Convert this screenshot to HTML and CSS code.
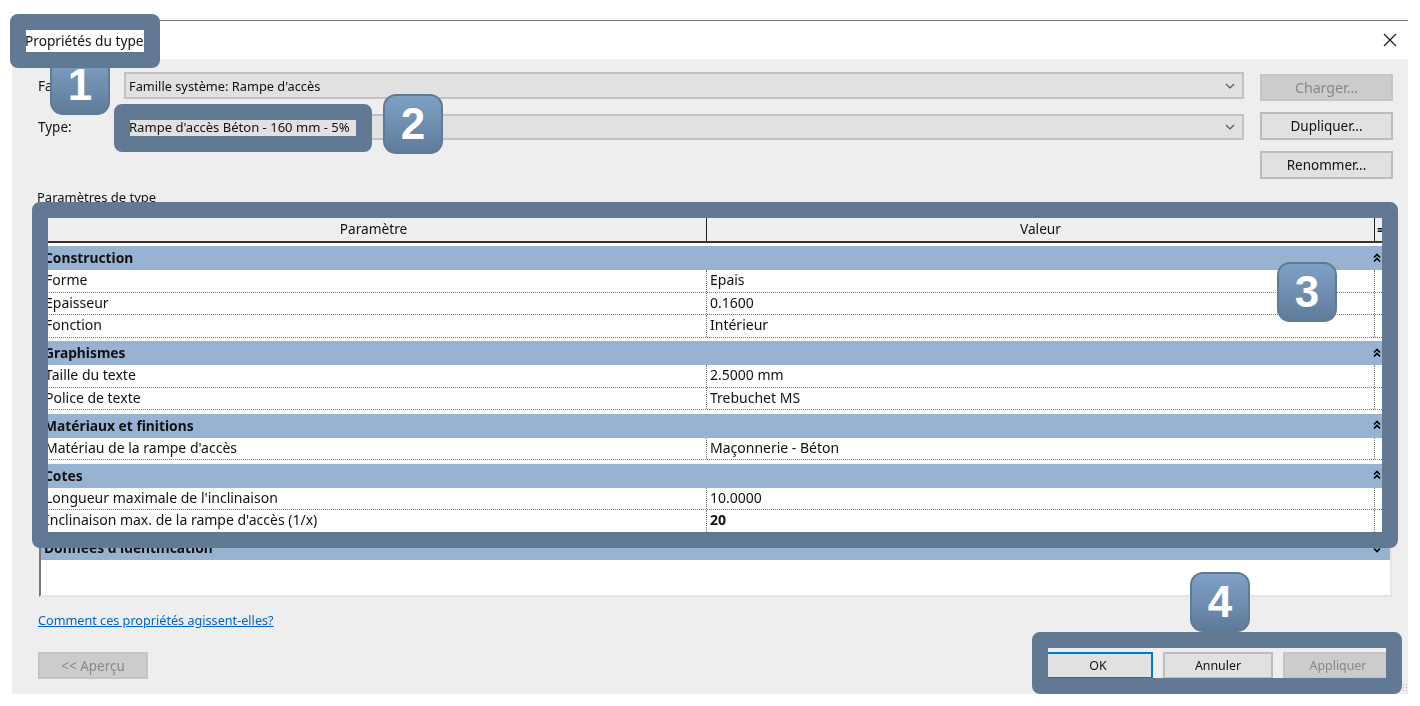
FILE: index.html
```html
<!DOCTYPE html>
<html lang="fr">
<head>
    <meta charset="UTF-8">
    <meta name="viewport" content="width=device-width, initial-scale=1.0">
    <title>Propriétés du type</title>
    <link rel="stylesheet" href="styles.css">
</head>
<body>

<div class="dialog">
    <div class="title-bar">
        <span>Propriétés du type</span>
        <svg class="close-icon" width="14" height="14" viewBox="0 0 14 14"><path d="M1 1 L13 13 M13 1 L1 13"/></svg>
    </div>

    <div class="dialog-body">
        <div class="top-block">
            <div class="fields">
                <div class="field first">
                    <label>Famille:</label>
                    <div class="combo">
                        <span>Famille système: Rampe d'accès</span>
                        <svg width="10" height="6" viewBox="0 0 10 6"><path d="M1 1 L5 5 L9 1"/></svg>
                    </div>
                </div>
                <div class="field second">
                    <label>Type:</label>
                    <div class="combo">
                        <span>Rampe d'accès Béton - 160 mm - 5%</span>
                        <svg width="10" height="6" viewBox="0 0 10 6"><path d="M1 1 L5 5 L9 1"/></svg>
                    </div>
                </div>
            </div>
            <div class="side-buttons">
                <button class="btn disabled charger">Charger...</button>
                <button class="btn tall">Dupliquer...</button>
                <button class="btn tall">Renommer...</button>
            </div>
        </div>

        <div class="params-label">Paramètres de type</div>

        <div class="params">
            <div class="params-head">
                <div class="head-cell">Paramètre</div>
                <div class="head-cell">Valeur</div>
                <div class="head-last">=</div>
            </div>

            <div class="group">
                <div class="group-title">
                    <span>Construction</span>
                    <svg class="fold" width="8" height="10" viewBox="0 0 8 10"><path d="M1 4.500 L4 1.500 L7 4.500 M1 8.500 L4 5.500 L7 8.500"/></svg>
                </div>
                <div class="row"><div class="cell">Forme</div><div class="cell value">Epais</div><div class="cell"></div></div>
                <div class="row"><div class="cell">Epaisseur</div><div class="cell value">0.1600</div><div class="cell"></div></div>
                <div class="row"><div class="cell">Fonction</div><div class="cell value">Intérieur</div><div class="cell"></div></div>
            </div>

            <div class="group">
                <div class="group-title">
                    <span>Graphismes</span>
                    <svg class="fold" width="8" height="10" viewBox="0 0 8 10"><path d="M1 4.500 L4 1.500 L7 4.500 M1 8.500 L4 5.500 L7 8.500"/></svg>
                </div>
                <div class="row"><div class="cell">Taille du texte</div><div class="cell value">2.5000 mm</div><div class="cell"></div></div>
                <div class="row"><div class="cell">Police de texte</div><div class="cell value">Trebuchet MS</div><div class="cell"></div></div>
            </div>

            <div class="group">
                <div class="group-title">
                    <span>Matériaux et finitions</span>
                    <svg class="fold" width="8" height="10" viewBox="0 0 8 10"><path d="M1 4.500 L4 1.500 L7 4.500 M1 8.500 L4 5.500 L7 8.500"/></svg>
                </div>
                <div class="row"><div class="cell">Matériau de la rampe d'accès</div><div class="cell value">Maçonnerie - Béton</div><div class="cell"></div></div>
            </div>

            <div class="group">
                <div class="group-title">
                    <span>Cotes</span>
                    <svg class="fold" width="8" height="10" viewBox="0 0 8 10"><path d="M1 4.500 L4 1.500 L7 4.500 M1 8.500 L4 5.500 L7 8.500"/></svg>
                </div>
                <div class="row"><div class="cell">Longueur maximale de l'inclinaison</div><div class="cell value">10.0000</div><div class="cell"></div></div>
                <div class="row"><div class="cell">Inclinaison max. de la rampe d'accès (1/x)</div><div class="cell value strong">20</div><div class="cell"></div></div>
            </div>

            <div class="group">
                <div class="group-title">
                    <span>Données d'identification</span>
                    <svg class="fold" width="8" height="10" viewBox="0 0 8 10"><path d="M1 1.500 L4 4.500 L7 1.500 M1 5.500 L4 8.500 L7 5.500"/></svg>
                </div>
            </div>
        </div>

        <a class="help-link" href="#">Comment ces propriétés agissent-elles?</a>

        <div class="footer">
            <button class="btn disabled wide">&lt;&lt; Aperçu</button>
            <div class="footer-right">
                <button class="btn wide default">OK</button>
                <button class="btn wide">Annuler</button>
                <button class="btn wide disabled">Appliquer</button>
            </div>
        </div>
    </div>
    <div class="grip"></div>
</div>

<!-- numbered callouts drawn over the dialog -->
<div class="badge badge-1">1</div>
<div class="badge badge-2">2</div>
<div class="badge badge-3">3</div>
<div class="badge badge-4">4</div>
<div class="callout callout-1"></div>
<div class="callout callout-2"></div>
<div class="callout callout-3"></div>
<div class="callout callout-4"></div>

</body>
</html>
```

FILE: styles.css
```css
body {
    font-family: "Noto Sans", sans-serif;
    font-size: 13.5px;
    color: #111;
    margin: 0;
    padding: 0;
    background-color: white;
}

.dialog {
    position: relative;
    width: 1396px;
    height: 674px;
    margin: 20px 0 0 12px;
    border-top: 1px solid #777;
    background-color: white;
    filter: blur(0.35px); /* the capture is a soft, scaled up screenshot */
}

.title-bar {
    height: 38px;
    padding: 0 12px 0 13px;
    display: flex;
    align-items: center;
    justify-content: space-between;
    font-size: 13.7px;
}

.close-icon {
    margin-right: -1px;
}

.close-icon path {
    fill: none;
    stroke: #222;
    stroke-width: 1.3;
}

.dialog-body {
    height: 635px;
    box-sizing: border-box;
    padding: 13px 15px 0 26px;
    background-color: #eeeeee;
}

.top-block {
    display: flex;
    justify-content: space-between;
}

.fields {
    width: 1206px;
}

.field {
    display: flex;
    align-items: center;
}

.field.first {
    height: 27px;
}

.field.second {
    height: 26px;
    margin-top: 15px;
}

.field label {
    width: 86px;
}

.combo {
    flex: 1;
    height: 100%;
    box-sizing: border-box;
    padding: 0 7px 0 3px;
    display: flex;
    align-items: center;
    justify-content: space-between;
    font-size: 12.8px;
    background-color: #e1e1e1;
    border: 2px solid #c2c2c2;
}

.field.second .combo {
    font-size: 13.050px;
}

.combo svg path {
    fill: none;
    stroke: #555;
    stroke-width: 1.2;
}

.side-buttons {
    width: 133px;
    display: flex;
    flex-direction: column;
    gap: 11px;
    padding-top: 2px;
}

.btn {
    font: inherit;
    color: #111;
    height: 27px;
    padding: 0;
    background-color: #e1e1e1;
    border: 2px solid #bcbcbc;
}

.btn.tall {
    height: 28px;
}

.btn.wide {
    width: 110px;
}

.btn.disabled {
    color: #888;
    background-color: #cccccc;
    border-color: #c4c4c4;
}

.btn.charger {
    font-size: 14.2px;
}

.btn.default {
    border-color: #0078d7;
}

.params-label {
    height: 18px;
    margin-top: 9px;
    margin-left: -1px;
    line-height: 18px;
    font-size: 13px;
}

.params {
    height: 391px;
    box-sizing: border-box;
    margin: 0 1px;
    font-size: 14px;
    background-color: white;
    border-left: 2px solid #777;
    border-top: 2px solid #777;
    border-right: 2px solid #e4e4e4;
    border-bottom: 2px solid #e4e4e4;
}

.params-head {
    height: 35px;
    box-sizing: border-box;
    margin-bottom: 3px;
    display: grid;
    grid-template-columns: 666px 668px 1fr;
    font-size: 13.7px;
    background-color: #eeeeee;
    border-bottom: 2px solid #333;
}

.head-cell {
    display: flex;
    align-items: flex-end;
    justify-content: center;
    padding-bottom: 3px;
    border-right: 1px solid #222;
}

.head-last {
    font-weight: bold;
    padding: 12px 0 0 2px;
}

.group {
    margin-bottom: 3.500px;
}

.group-title {
    height: 24px;
    box-sizing: border-box;
    padding: 0 9px 1px 3px;
    display: flex;
    align-items: center;
    justify-content: space-between;
    font-size: 13.800px;
    font-weight: bold;
    background-color: #98b3d1;
}

.fold path {
    fill: none;
    stroke: #000;
    stroke-width: 1.7;
}

.row {
    height: 22.500px;
    box-sizing: border-box;
    display: grid;
    grid-template-columns: 666px 668px 1fr;
    border-bottom: 1px dotted #777;
}

.cell {
    padding-left: 4px;
    line-height: 20px;
    white-space: nowrap;
    border-right: 1px dotted #777;
}

.cell:last-child {
    border-right: none;
}

.cell.value {
    padding-left: 3px;
}

.cell.strong {
    font-weight: bold;
}

.help-link {
    display: inline-block;
    height: 20px;
    margin-top: 13px;
    line-height: 20px;
    font-size: 12.650px;
    color: #0066cc;
}

.footer {
    margin-top: 22px;
    display: flex;
    justify-content: space-between;
}

.footer-right {
    display: flex;
    gap: 10px;
    font-size: 12.400px;
}

.grip {
    position: absolute;
    right: 0;
    bottom: 2px;
    width: 6px;
    height: 10px;
    background-image: radial-gradient(#b5b5b5 1px, transparent 1px);
    background-size: 3px 3px;
}

/* annotations */
.callout {
    position: absolute;
    box-sizing: border-box;
    border: 16px solid #617993;
    border-radius: 8px;
}

.callout-1 {
    left: 10px;
    top: 14px;
    width: 150px;
    height: 54px;
}

.callout-2 {
    left: 114px;
    top: 104px;
    width: 258px;
    height: 48px;
}

.callout-3 {
    left: 32px;
    top: 202px;
    width: 1366px;
    height: 346px;
}

.callout-4 {
    left: 1032px;
    top: 632px;
    width: 370px;
    height: 62px;
}

.badge {
    position: absolute;
    box-sizing: border-box;
    width: 60px;
    height: 60px;
    display: flex;
    align-items: center;
    justify-content: center;
    font-family: "Liberation Sans", sans-serif;
    font-size: 44px;
    font-weight: bold;
    color: white;
    background: linear-gradient(#7fa1c6, #5f7b9b);
    border: 2px solid #617993;
    border-radius: 13px;
}

.badge-1 {
    left: 50px;
    top: 55px;
}

.badge-2 {
    left: 383px;
    top: 94px;
}

.badge-3 {
    left: 1277px;
    top: 262px;
}

.badge-4 {
    left: 1190px;
    top: 572px;
}
```
